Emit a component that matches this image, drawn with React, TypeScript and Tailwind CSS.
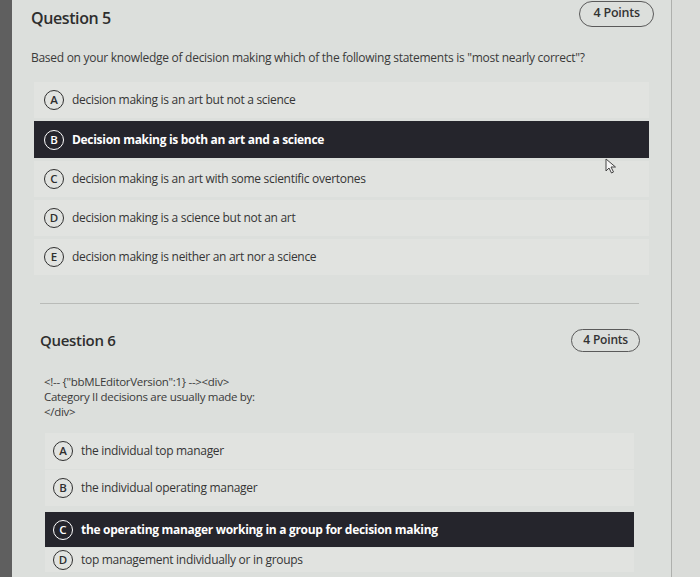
import React from "react";

const font = { fontFamily: '"Open Sans", "Noto Sans", sans-serif' };

function Letter({ l, dark }: { l: string; dark?: boolean }) {
  return (
    <span
      className={
        "flex h-[20px] w-[20px] shrink-0 items-center justify-center rounded-full border-[1.5px] text-[11.5px] font-semibold leading-none " +
        (dark ? "border-white text-white" : "border-[#2f2f2f] text-[#2f2f2f]")
      }
    >
      {l}
    </span>
  );
}

function Option({ l, text, dark, h, pl }: { l: string; text: string; dark?: boolean; h: string; pl: string }) {
  return (
    <div
      className={
        "flex items-center gap-[8px] " +
        pl +
        " " +
        h +
        " " +
        (dark ? "bg-[#25252c] text-white font-bold" : "bg-[#e1e3e0] text-[#353535] font-medium")
      }
    >
      <Letter l={l} dark={dark} />
      <span className="text-[12px] tracking-[-0.3px]">{text}</span>
    </div>
  );
}

export default function App() {
  return (
    <div style={font} className="flex h-[577px] w-[700px] overflow-hidden bg-[#dcdfdc]">
      <div className="w-[12px] shrink-0 bg-[#5f5f5f]" />
      <div className="relative w-[660px] shrink-0 border-r border-[#aeb0ad]">
        {/* Question 5 */}
        <div className="pl-[19px] pr-[17px]">
          <div className="flex h-[27px] items-center justify-between">
            <span className="mt-[8px] text-[16px] font-semibold tracking-[-0.4px] text-[#2e2e2e]">Question 5</span>
            <div className="flex h-[26px] items-center rounded-full border-[1.5px] border-[#5a5a5a] px-[13px] text-[12.5px] font-semibold tracking-[-0.2px] text-[#333]">
              4 Points
            </div>
          </div>
          <div className="mt-[23px] text-[12px] leading-[16px] tracking-[-0.28px] text-[#3a3a3a]">
            Based on your knowledge of decision making which of the following statements is "most nearly correct"?
          </div>
        </div>
        <div className="ml-[22px] mr-[22px] mt-[16px] flex flex-col gap-[3px]">
          <Option pl="pl-[10px]" l="A" text="decision making is an art but not a science" h="h-[36px]" />
          <Option pl="pl-[10px]" l="B" text="Decision making is both an art and a science" dark h="h-[37px]" />
          <Option pl="pl-[10px]" l="C" text="decision making is an art with some scientific overtones" h="h-[36px]" />
          <Option pl="pl-[10px]" l="D" text="decision making is a science but not an art" h="h-[36px]" />
          <Option pl="pl-[10px]" l="E" text="decision making is neither an art nor a science" h="h-[36px]" />
        </div>
        <div className="ml-[28px] mr-[32px] mt-[28px] h-px bg-[#b9bbb8]" />

        {/* Question 6 */}
        <div className="pl-[28px] pr-[31px]">
          <div className="mt-[24px] flex h-[24px] items-center justify-between">
            <span className="text-[15px] font-semibold tracking-[-0.3px] text-[#2e2e2e]">Question 6</span>
            <div className="flex h-[23px] items-center rounded-full border-[1.5px] border-[#5a5a5a] px-[11px] text-[12px] font-semibold tracking-[-0.2px] text-[#333]">
              4 Points
            </div>
          </div>
          <div className="ml-[4px] mt-[22px] flex flex-col text-[11.5px] leading-[15px] tracking-[-0.3px] text-[#3a3a3a]">
            <span>{'<!-- {"bbMLEditorVersion":1} --><div>'}</span>
            <span>Category II decisions are usually made by:</span>
            <span>{"</div>"}</span>
          </div>
        </div>
        <div className="ml-[33px] mr-[37px] mt-[14px] flex flex-col gap-[1px]">
          <Option pl="pl-[8px]" l="A" text="the individual top manager" h="h-[36px]" />
          <Option pl="pl-[8px]" l="B" text="the individual operating manager" h="h-[36px]" />
          <div className="h-[4px]" />
          <Option pl="pl-[8px]" l="C" text="the operating manager working in a group for decision making" dark h="h-[35px]" />
          <Option pl="pl-[8px]" l="D" text="top management individually or in groups" h="h-[24px]" />
        </div>

        {/* mouse cursor */}
        <svg className="absolute left-[593px] top-[158px]" width="12" height="16" viewBox="0 0 12 16">
          <path d="M1 1 L1 13 L4 10 L6.5 15 L8.5 14 L6 9 L10.5 9 Z" fill="#f4f4f4" stroke="#444" strokeWidth="1" strokeLinejoin="round" />
        </svg>
      </div>
      <div className="flex-1 bg-[#dadcd9]" />
    </div>
  );
}
